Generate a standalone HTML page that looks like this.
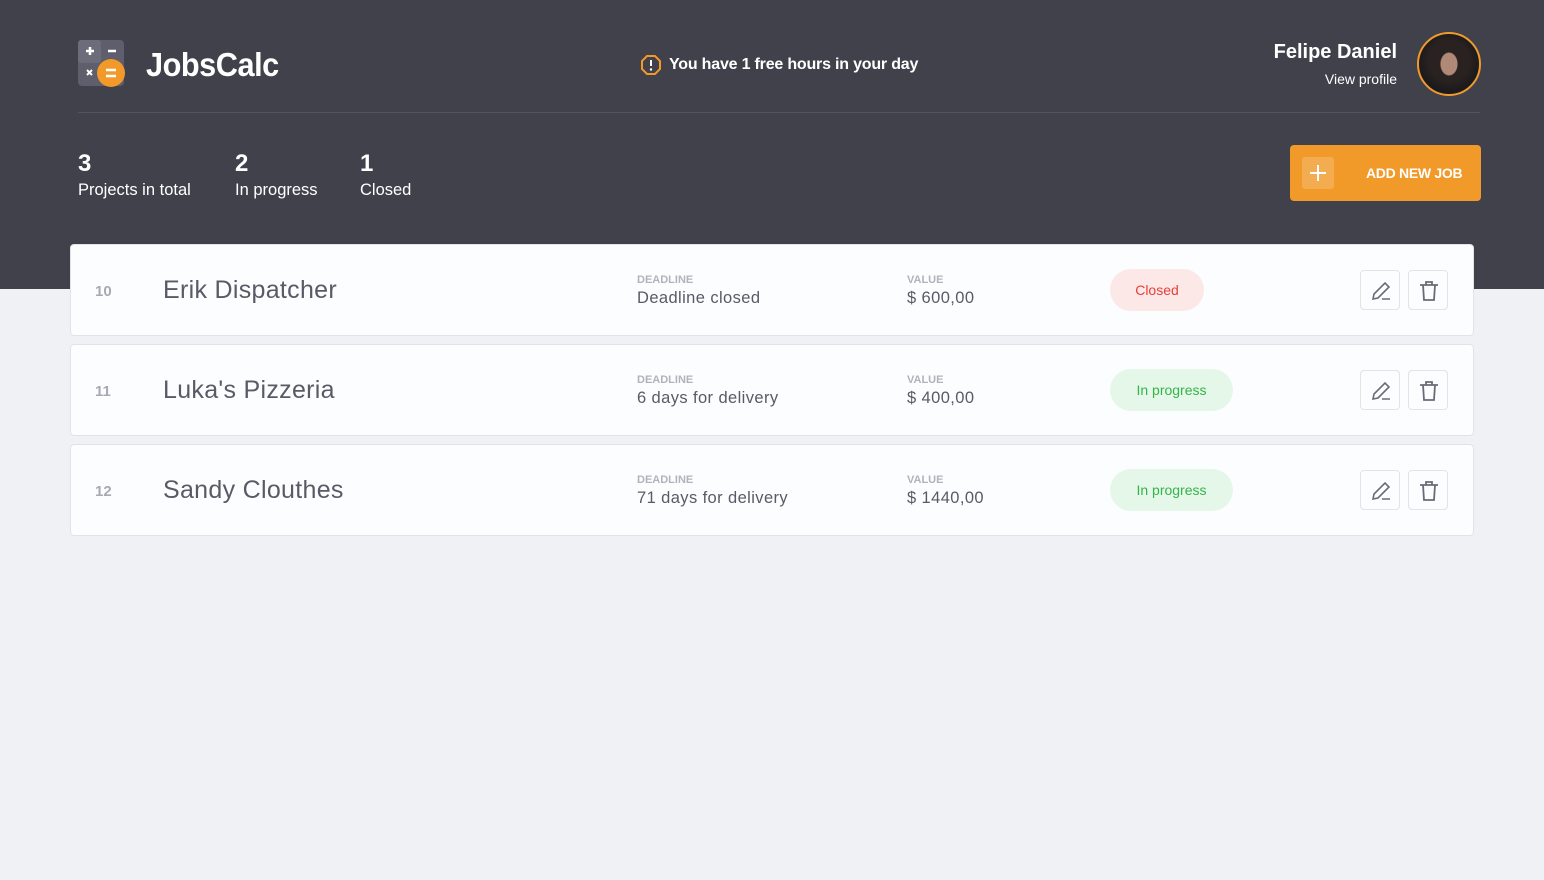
<!DOCTYPE html>
<html><head><meta charset="utf-8"><style>
*{margin:0;padding:0;box-sizing:border-box}
body{width:1544px;height:880px;background:#f0f1f4;font-family:"Liberation Sans",sans-serif;position:relative;overflow:hidden}
.top{position:absolute;left:0;top:0;width:1544px;height:289px;background:#41414c}
.abs{position:absolute}
.w{color:#fff}
.card{position:absolute;left:70px;width:1404px;height:92px;background:#fcfdfe;border:1px solid #e1e3e6;border-radius:4px}
.card .id{position:absolute;left:24px;top:38px;font-size:15px;color:#a9a9b3;font-weight:bold}
.card .name{position:absolute;left:92px;top:31px;font-size:25px;color:#5a5a66;letter-spacing:0.3px}
.lbl{position:absolute;font-size:11px;font-weight:bold;color:#b2b2bb;top:29px}
.val{position:absolute;font-size:16.5px;color:#5a5a66;top:44px;letter-spacing:0.4px}
.badge{position:absolute;left:1039px;top:24px;height:42px;border-radius:21px;font-size:14px;line-height:42px;text-align:center}
.btn{position:absolute;top:25px;width:40px;height:40px;border:1px solid #e1e3e6;border-radius:4px;background:#fcfdfe}
.btn svg{position:absolute;left:8px;top:8px}
</style></head><body>
<div class="top"></div>
<svg class="abs" style="left:78px;top:40px" width="48" height="48" viewBox="0 0 48 48">
<rect x="0" y="0" width="46" height="46" rx="4" fill="#5e5e6c"/>
<rect x="0" y="0" width="23" height="23" rx="3" fill="#6c6c7b"/>
<path d="M8 11h8M12 7v8M30 11h8" stroke="#fff" stroke-width="2.5"/>
<path d="M9 30l5 5M14 30l-5 5" stroke="#fff" stroke-width="2"/>
<circle cx="33" cy="33" r="14" fill="#f19a2a"/>
<path d="M28 30h10M28 36h10" stroke="#fff" stroke-width="2.5"/>
</svg>
<div class="abs w" style="left:146px;top:46px;font-size:33px;font-weight:bold;letter-spacing:-0.5px;transform:scaleX(0.93);transform-origin:left">JobsCalc</div>
<svg class="abs" style="left:640px;top:54px" width="22" height="22" viewBox="0 0 22 22"><path d="M7 2h8l5 5v8l-5 5H7l-5-5V7z" fill="none" stroke="#f19a2a" stroke-width="2"/><path d="M11 6v6" stroke="#fff" stroke-width="2"/><circle cx="11" cy="15.5" r="1.2" fill="#fff"/></svg>
<div class="abs w" style="left:669px;top:56px;font-size:16px;font-weight:bold;letter-spacing:-0.2px">You have 1 free hours in your day</div>
<div class="abs w" style="right:147px;top:41px;font-size:20px;font-weight:bold">Felipe Daniel</div>
<div class="abs w" style="right:147px;top:71px;font-size:14px">View profile</div>
<div class="abs" style="left:1417px;top:32px;width:64px;height:64px;border-radius:50%;border:2px solid #f19a2a;background:radial-gradient(ellipse 9px 12px at 50% 50%,#b08a76 0 90%,transparent 100%),radial-gradient(circle at 50% 45%,#2a2220 0 20px,#1c1a1c 30px)"></div>
<div class="abs" style="left:78px;top:112px;width:1402px;height:1px;background:#54545f"></div>
<div class="abs w" style="left:78px;top:150px;font-size:24px;font-weight:bold">3</div>
<div class="abs w" style="left:78px;top:181px;font-size:16.5px">Projects in total</div>
<div class="abs w" style="left:235px;top:150px;font-size:24px;font-weight:bold">2</div>
<div class="abs w" style="left:235px;top:181px;font-size:16.5px">In progress</div>
<div class="abs w" style="left:360px;top:150px;font-size:24px;font-weight:bold">1</div>
<div class="abs w" style="left:360px;top:181px;font-size:16.5px">Closed</div>
<div class="abs" style="left:1290px;top:145px;width:191px;height:56px;background:#f19a2a;border-radius:4px">
<div class="abs" style="left:12px;top:12px;width:32px;height:32px;border-radius:3px;background:#f3ad50"></div>
<svg class="abs" style="left:18px;top:18px" width="20" height="20"><path d="M10 2v16M2 10h16" stroke="#fff" stroke-width="2"/></svg>
<div class="abs w" style="left:76px;top:20px;font-size:14px;font-weight:bold;letter-spacing:-0.3px">ADD NEW JOB</div>
</div>

<div class="card" style="top:244px">
<div class="id">10</div><div class="name">Erik Dispatcher</div>
<div class="lbl" style="left:566px">DEADLINE</div><div class="val" style="left:566px">Deadline closed</div>
<div class="lbl" style="left:836px">VALUE</div><div class="val" style="left:836px">$ 600,00</div>
<div class="badge" style="width:94px;background:#fbe8e7;color:#e83f3a">Closed</div>
<div class="btn" style="left:1289px"><svg width="24" height="24" viewBox="0 0 24 24" fill="none" stroke="#6b6b77" stroke-width="1.6"><path d="M4 20l1-5L16 4l4 4L9 19zM13 20h8"/></svg></div>
<div class="btn" style="left:1337px"><svg width="24" height="24" viewBox="0 0 24 24" fill="none" stroke="#6b6b77" stroke-width="1.8"><path d="M3 6h18M9 6V3h6v3M6 6l1 15h10l1-15"/></svg></div>
</div>
<div class="card" style="top:344px">
<div class="id">11</div><div class="name">Luka's Pizzeria</div>
<div class="lbl" style="left:566px">DEADLINE</div><div class="val" style="left:566px">6 days for delivery</div>
<div class="lbl" style="left:836px">VALUE</div><div class="val" style="left:836px">$ 400,00</div>
<div class="badge" style="width:123px;background:#e5f7e8;color:#36b34a">In progress</div>
<div class="btn" style="left:1289px"><svg width="24" height="24" viewBox="0 0 24 24" fill="none" stroke="#6b6b77" stroke-width="1.6"><path d="M4 20l1-5L16 4l4 4L9 19zM13 20h8"/></svg></div>
<div class="btn" style="left:1337px"><svg width="24" height="24" viewBox="0 0 24 24" fill="none" stroke="#6b6b77" stroke-width="1.8"><path d="M3 6h18M9 6V3h6v3M6 6l1 15h10l1-15"/></svg></div>
</div>
<div class="card" style="top:444px">
<div class="id">12</div><div class="name">Sandy Clouthes</div>
<div class="lbl" style="left:566px">DEADLINE</div><div class="val" style="left:566px">71 days for delivery</div>
<div class="lbl" style="left:836px">VALUE</div><div class="val" style="left:836px">$ 1440,00</div>
<div class="badge" style="width:123px;background:#e5f7e8;color:#36b34a">In progress</div>
<div class="btn" style="left:1289px"><svg width="24" height="24" viewBox="0 0 24 24" fill="none" stroke="#6b6b77" stroke-width="1.6"><path d="M4 20l1-5L16 4l4 4L9 19zM13 20h8"/></svg></div>
<div class="btn" style="left:1337px"><svg width="24" height="24" viewBox="0 0 24 24" fill="none" stroke="#6b6b77" stroke-width="1.8"><path d="M3 6h18M9 6V3h6v3M6 6l1 15h10l1-15"/></svg></div>
</div>
</body></html>
